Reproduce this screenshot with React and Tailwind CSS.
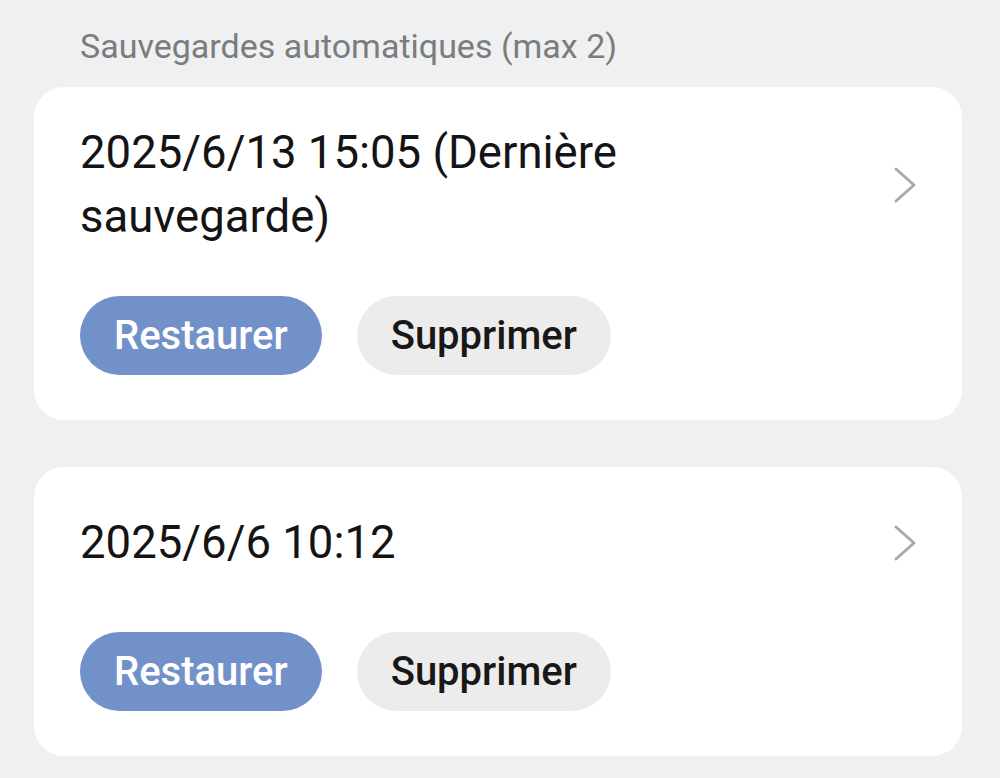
import React from "react";

function Chevron() {
  return (
    <svg width="26" height="38" viewBox="0 0 26 38" fill="none" className="shrink-0">
      <polyline points="4,3 22,19 4,35" stroke="#a9a9ab" strokeWidth="3" strokeLinecap="round" strokeLinejoin="round" />
    </svg>
  );
}

function BackupCard({ title }) {
  return (
    <div className="bg-white rounded-[30px] pl-[46px] pr-[44px] pt-[34px] pb-[45px]">
      <div className="flex items-center justify-between min-h-[84px]">
        <div className="text-[45.5px] leading-[64px] text-[#141414] max-w-[560px]">{title}</div>
        <Chevron />
      </div>
      <div className="flex gap-[35px] mt-[47px]">
        <button className="h-[79px] px-[34px] rounded-full bg-[#7391c9] text-white text-[40px] leading-none font-medium">
          Restaurer
        </button>
        <button className="h-[79px] px-[34px] rounded-full bg-[#ececec] text-[#181818] text-[40px] leading-none font-medium">
          Supprimer
        </button>
      </div>
    </div>
  );
}

export default function App() {
  return (
    <div
      className="w-[1000px] h-[778px] bg-[#eff0f2] pl-[34px] pr-[38px] overflow-hidden"
      style={{ fontFamily: "Roboto, 'Noto Sans', sans-serif" }}
    >
      <div className="pl-[46px] pt-[26px] pb-[21px] text-[34px] leading-[40px] text-[#7c7c7c]">
        Sauvegardes automatiques (max 2)
      </div>
      <div className="flex flex-col gap-[47px]">
        <BackupCard title="2025/6/13 15:05 (Dernière sauvegarde)" />
        <BackupCard title="2025/6/6 10:12" />
      </div>
    </div>
  );
}
